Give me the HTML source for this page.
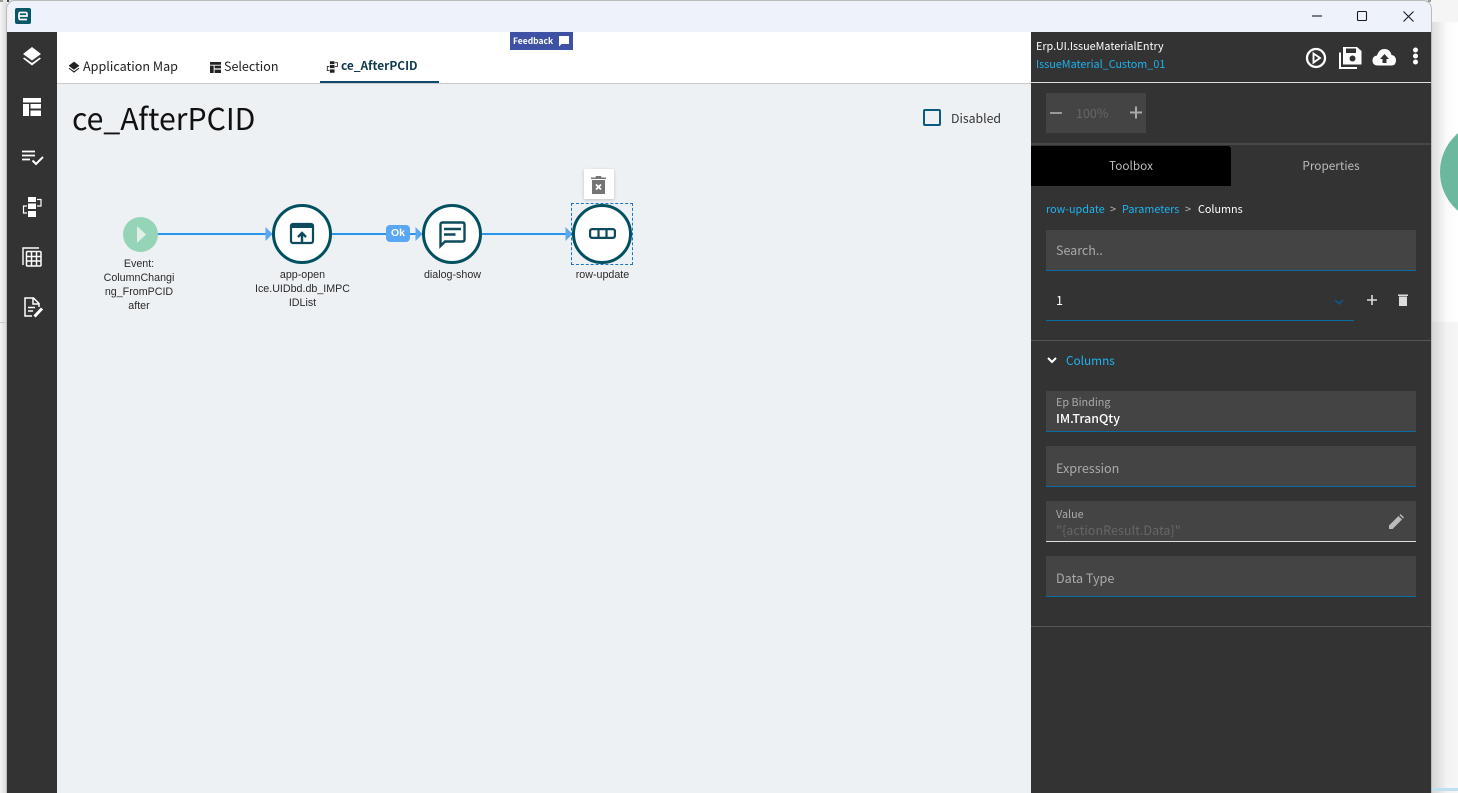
<!DOCTYPE html>
<html><head><meta charset="utf-8"><style>
*{box-sizing:border-box}
html,body{margin:0;padding:0;width:1458px;height:793px;overflow:hidden;background:#f5f5f5}
body{position:relative;font-family:"Noto Sans CJK JP","Liberation Sans",sans-serif;font-size:13px;color:#222}
.a{position:absolute;white-space:nowrap;line-height:1}
.r{font-family:"Liberation Sans",sans-serif}
svg{position:absolute;overflow:visible}
.lab{position:absolute;text-align:center;font-family:"Liberation Sans",sans-serif;font-size:10.700px;line-height:14px;color:#2a2a2a}
.field{position:absolute;left:1046px;width:370px;background:#444;border-bottom:1px solid #0a6aa3;height:41px}
.node{position:absolute;width:60px;height:60px;border:3.5px solid #00505f;border-radius:50%;background:#fff}
</style></head><body>
<!-- background -->
<div class="a" style="left:1431px;top:22px;width:27px;height:300px;background:linear-gradient(90deg,#dcdcdc,#fbfbfb 60%,#fff);overflow:hidden"><div style="position:absolute;left:9px;top:99px;width:102px;height:102px;border-radius:50%;background:#6cb89f"></div></div>
<div class="a" style="left:1431px;top:322px;width:27px;height:471px;background:linear-gradient(90deg,#d4d4d4,#f3f3f3 60%,#f6f6f6)"></div>
<div class="a" style="left:1431px;top:788px;width:27px;height:3px;background:#bfe0f0"></div>
<div class="a" style="left:0;top:0;width:7px;height:793px;background:linear-gradient(90deg,#f5f5f5,#d8d8d8)"></div>
<div class="a" style="left:0;top:322px;width:7px;height:1px;background:#ccc"></div>
<div class="a" style="left:0;top:0;width:1431px;height:2px;background:repeating-linear-gradient(90deg,#999 0 3px,#e8e8e8 3px 7px,#444 7px 9px,#ddd 9px 14px)"></div>
<!-- window -->
<div class="a" style="left:7px;top:1px;width:1424px;height:792px;background:#eef3fb;border-radius:8px 8px 0 0;box-shadow:0 0 0 1px #bbb"></div>
<div class="a" style="left:15px;top:8px;width:16px;height:16px;background:#07566a;border-radius:2px"></div>
<svg style="left:15px;top:8px" width="16" height="16" viewBox="0 0 16 16"><path d="M12 11.500H5.500Q4 11.500 4 10V6Q4 4.500 5.500 4.500H10.500Q12 4.500 12 6V8H4.500" fill="none" stroke="#fff" stroke-width="1.700"/></svg>
<svg style="left:1300px;top:0" width="130" height="32" viewBox="0 0 130 32" fill="none" stroke="#1a1a1a" stroke-width="1.100"><path d="M12 16H22"/><rect x="57.500" y="11.500" width="9" height="9" rx="1"/><path d="M103.500 11.500L113.500 21.500M113.500 11.500L103.500 21.500"/></svg>
<!-- sidebar -->
<div class="a" style="left:7px;top:32px;width:50px;height:761px;background:#333"></div>
<svg style="left:22px;top:46px" width="20" height="20" viewBox="0 0 20 20" fill="#fff"><path d="M10 1L1 8L10 14.500L19 8Z"/><path d="M2.300 11.500L1 12.500L10 19.500L19 12.500L17.700 11.500L10 17Z"/></svg>
<svg style="left:23px;top:98px" width="18" height="18" viewBox="0 0 18 18" fill="#fff"><path d="M0 0H18V4.500H0ZM0 6H6V18H0ZM7.500 6H18V10.500H7.500ZM7.500 12.500H18V18H7.500Z"/></svg>
<svg style="left:22px;top:150px" width="22" height="16" viewBox="0 0 22 16" fill="none" stroke="#fff" stroke-width="1.800"><path d="M0 1.500H13M0 5.500H13M0 9.500H8"/><path d="M10.500 10.500L14 14L21 7" stroke-width="2"/></svg>
<svg style="left:23px;top:197px" width="19" height="20" viewBox="0 0 19 20"><path fill="#fff" d="M5 0H13V5H5ZM5 6.500H13V12H5ZM5 14H13V20H5Z"/><path d="M14 2.500H18V9H14M4 9H0.500V16H4" fill="none" stroke="#fff" stroke-width="1.200"/></svg>
<svg style="left:22px;top:247px" width="20" height="20" viewBox="0 0 20 20" fill="none" stroke="#fff"><path d="M1 18V1H17" stroke-width="1.400"/><rect x="4.500" y="4.500" width="14.500" height="14.500" rx="1" stroke-width="1.500"/><path d="M9.500 5V18.500M14.500 5V18.500M5 9.500H18.500M5 14H18.500" stroke-width="1.500"/></svg>
<svg style="left:24px;top:297px" width="20" height="21" viewBox="0 0 20 21" fill="none" stroke="#fff" stroke-width="1.500"><path d="M8 19H1V1H9.500L15 6.500V10"/><path d="M9 1.500V7H15" /><path d="M4 10.500H11M4 14H9"/><path d="M10.500 19.500L18 11.500" stroke-width="3"/></svg>
<!-- top tabs -->
<div class="a" style="left:57px;top:32px;width:974px;height:51px;background:#fff"></div>
<div class="a" style="left:57px;top:83px;width:974px;height:710px;background:#eef1f4;border-top:1px solid #ccc"></div>
<svg style="left:68px;top:61px" width="12" height="12" viewBox="0 0 20 20" fill="#222"><path d="M10 1L1 8L10 14.500L19 8Z"/><path d="M2.300 11.500L1 12.500L10 19.500L19 12.500L17.700 11.500L10 17Z"/></svg>
<div class="a" style="left:83px;top:58px;font-size:12.600px;line-height:16px">Application Map</div>
<svg style="left:210px;top:62px" width="11" height="11" viewBox="0 0 18 18" fill="#222"><path d="M0 0H18V4.500H0ZM0 6H6V18H0ZM7.500 6H18V10.500H7.500ZM7.500 12.500H18V18H7.500Z"/></svg>
<div class="a" style="left:224px;top:58px;font-size:12.500px;line-height:16px">Selection</div>
<svg style="left:327px;top:61px" width="11" height="12" viewBox="0 0 19 20"><path fill="#222" d="M5 0H13V5H5ZM5 6.500H13V12H5ZM5 14H13V20H5Z"/><path d="M14 2.500H18V9H14M4 9H0.500V16H4" fill="none" stroke="#222" stroke-width="1.500"/></svg>
<div class="a" style="left:341px;top:58px;font-size:11.900px;line-height:16px;color:#0f3a4d;font-weight:700">ce_AfterPCID</div>
<div class="a" style="left:320px;top:81px;width:119px;height:2px;background:#0d4a6b"></div>
<div class="a" style="left:510px;top:32px;width:63px;height:18px;background:#3f51a5;color:#fff;font-size:8.500px;font-weight:700;line-height:18px;padding-left:3px">Feedback</div>
<svg style="left:558px;top:35px" width="12" height="12" viewBox="0 0 12 12" fill="#fff"><path d="M1 1H11V9H3.500L1 11.500Z"/></svg>
<!-- title -->
<div class="a" style="left:72px;top:98px;font-size:30.200px;line-height:38px;color:#111">ce_AfterPCID</div>
<div class="a" style="left:923px;top:109px;width:18px;height:17px;border:2px solid #0a5a80;border-radius:2px"></div>
<div class="a" style="left:951px;top:110px;font-size:12.300px;line-height:16px;color:#333">Disabled</div>
<!-- connectors -->
<svg style="left:0;top:0" width="1031" height="300"><path d="M157 234H272M331 234H423M481 234H573" stroke="#2b95ec" stroke-width="2" fill="none"/><path d="M265.500 227L272.500 234L265.500 241ZM415.500 227L422.500 234L415.500 241ZM565.500 227L572.500 234L565.500 241Z" fill="#5aa7f2"/></svg>
<div class="a r" style="left:386px;top:225px;width:24px;height:17px;background:#5aa7f5;border-radius:4px;color:#fff;font-weight:700;font-size:10.500px;line-height:17px;text-align:center">Ok</div>
<!-- start node -->
<div class="a" style="left:123px;top:217px;width:35px;height:35px;border-radius:50%;background:#95d4b6"></div>
<svg style="left:136px;top:226px" width="11" height="17" viewBox="0 0 11 17"><path d="M1 0L10 8.500L1 17Z" fill="#e2efe9"/></svg>
<div class="lab" style="left:97px;top:257px;width:84px">Event:<br>ColumnChangi<br>ng_FromPCID<br>after</div>
<!-- app-open -->
<div class="node" style="left:272px;top:204px"></div>
<svg style="left:290px;top:222px" width="24" height="24" viewBox="0 0 24 24" fill="none" stroke="#0d4a5c" stroke-width="2.200"><rect x="1" y="2" width="22" height="19" rx="2"/><path d="M1 4H23" stroke-width="4"/><path d="M12 21V11.500M8 15L12 11L16 15" stroke-width="2.400"/></svg>
<div class="lab" style="left:250px;top:268px;width:105px">app-open<br>Ice.UIDbd.db_IMPC<br>IDList</div>
<!-- dialog-show -->
<div class="node" style="left:422px;top:204px"></div>
<svg style="left:439px;top:221px" width="27" height="27" viewBox="0 0 27 27" fill="none" stroke="#0d4a5c" stroke-width="2.400"><path d="M1.500 25V3.500Q1.500 1.500 3.500 1.500H23.500Q25.500 1.500 25.500 3.500V18.500Q25.500 20.500 23.500 20.500H6Z"/><path d="M5 8H22M5 13.500H16.500"/></svg>
<div class="lab" style="left:405px;top:268px;width:95px">dialog-show</div>
<!-- row-update -->
<div class="a" style="left:571px;top:203px;width:62px;height:62px;border:1px dashed #1a75c8"></div>
<div class="node" style="left:572px;top:204px"></div>
<svg style="left:589px;top:228px" width="27" height="11" viewBox="0 0 27 11" fill="none" stroke="#0d4a5c" stroke-width="2.200"><rect x="1.100" y="1.100" width="24.800" height="8.800" rx="2"/><path d="M9.500 1V10M17.500 1V10"/></svg>
<div class="lab" style="left:555px;top:268px;width:95px">row-update</div>
<div class="a" style="left:584px;top:169px;width:30px;height:30px;background:#fff;border-radius:1px;box-shadow:0 1px 3px rgba(0,0,0,.2)"></div>
<svg style="left:591px;top:176px" width="15" height="18" viewBox="0 0 15 18"><path d="M0 1.500H4.500L5 0H10L10.500 1.500H15V3H0ZM1 4H14V18H1Z" fill="#757575"/><path d="M5 8.500L10 13.500M10 8.500L5 13.500" stroke="#fff" stroke-width="1.700"/></svg>
<!-- right panel -->
<div class="a" style="left:1031px;top:32px;width:400px;height:761px;background:#333"></div>
<div class="a" style="left:1036px;top:39px;font-size:10.800px;line-height:14px;color:#fff">Erp.UI.IssueMaterialEntry</div>
<div class="a" style="left:1036px;top:57px;font-size:10.800px;line-height:14px;color:#1eb4f0">IssueMaterial_Custom_01</div>
<svg style="left:1305px;top:47px" width="22" height="22" viewBox="0 0 22 22" fill="none" stroke="#fff" stroke-width="2.300"><circle cx="11" cy="11" r="9"/><path d="M8.500 6.500L15 11L8.500 15.500Z" stroke-width="1.900"/></svg>
<svg style="left:1338px;top:46px" width="24" height="24" viewBox="0 0 24 24" fill="#fff"><path d="M5 1H19L23.500 5V18.500H5Z"/><path d="M1 6.500V23H19V21H3V6.500Z"/><rect x="8" y="2.500" width="10" height="4.500" fill="#333"/><circle cx="14.500" cy="12.500" r="3" fill="#333"/></svg>
<svg style="left:1372px;top:48px" width="24" height="18" viewBox="0 0 24 18"><path d="M6 17.500Q0.500 17.500 0.500 12.500Q0.500 8 5 7.500Q7 1 12.500 1Q18 1 19.500 7Q24 7.500 24 12.500Q24 17.500 19 17.500Z" fill="#fff"/><path d="M12.500 6L8 11H10.500V15H14.500V11H17Z" fill="#333"/></svg>
<svg style="left:1412px;top:47px" width="7" height="18" viewBox="0 0 7 18" fill="#fff"><circle cx="3.500" cy="3" r="2.500"/><circle cx="3.500" cy="9" r="2.500"/><circle cx="3.500" cy="15" r="2.500"/></svg>
<div class="a" style="left:1031px;top:82px;width:400px;height:1px;background:#ddd"></div>
<div class="a" style="left:1046px;top:93px;width:100px;height:40px;background:#444"></div>
<svg style="left:1050px;top:106px" width="14" height="14" viewBox="0 0 14 14"><path d="M0 7H12" stroke="#999" stroke-width="2"/></svg>
<div class="a" style="left:1076px;top:105px;font-size:12.500px;line-height:16px;color:#666">100%</div>
<svg style="left:1130px;top:106px" width="13" height="13" viewBox="0 0 13 13"><path d="M0 6.500H12M6 .5V12.500" stroke="#aaa" stroke-width="2"/></svg>
<div class="a" style="left:1031px;top:143px;width:400px;height:2px;background:#484848"></div>
<div class="a" style="left:1031px;top:146px;width:200px;height:40px;background:#000;border-radius:0 3px 0 0"></div>
<div class="a" style="left:1031px;top:158px;width:200px;text-align:center;font-size:11.800px;line-height:16px;color:#bbb">Toolbox</div>
<div class="a" style="left:1231px;top:158px;width:200px;text-align:center;font-size:11.800px;line-height:16px;color:#bbb">Properties</div>
<div class="a" style="left:1046px;top:202px;font-size:10.800px;line-height:14px;color:#1eb4f0">row-update</div>
<div class="a" style="left:1110px;top:202px;font-size:10.800px;line-height:14px;color:#bbb">&gt;</div>
<div class="a" style="left:1122px;top:202px;font-size:10.800px;line-height:14px;color:#1eb4f0">Parameters</div>
<div class="a" style="left:1185px;top:202px;font-size:10.800px;line-height:14px;color:#bbb">&gt;</div>
<div class="a" style="left:1198px;top:202px;font-size:10.800px;line-height:14px;color:#fff">Columns</div>
<div class="field" style="top:230px"></div>
<div class="a" style="left:1056px;top:242px;font-size:12.500px;line-height:16px;color:#aaa">Search..</div>
<div class="a" style="left:1056px;top:292px;font-size:12.500px;line-height:16px;color:#fff">1</div>
<svg style="left:1334px;top:299px" width="10" height="7" viewBox="0 0 10 7"><path d="M1 1L5 5L9 1" fill="none" stroke="#0a5a95" stroke-width="1.500"/></svg>
<div class="a" style="left:1046px;top:320px;width:308px;height:1px;background:#0a6aa3"></div>
<svg style="left:1367px;top:295px" width="10" height="10" viewBox="0 0 10 10"><path d="M0 5H10M5 0V10" stroke="#ddd" stroke-width="1.600"/></svg>
<svg style="left:1398px;top:294px" width="10" height="12" viewBox="0 0 10 12"><path d="M0 .5H10V2H0ZM1 2.500H9V12H1Z" fill="#ddd"/></svg>
<div class="a" style="left:1031px;top:340px;width:400px;height:1px;background:#555"></div>
<svg style="left:1047px;top:357px" width="10" height="7" viewBox="0 0 10 7"><path d="M1 1L5 5L9 1" fill="none" stroke="#fff" stroke-width="2"/></svg>
<div class="a" style="left:1066px;top:353px;font-size:11.800px;line-height:16px;color:#1eb4f0">Columns</div>
<div class="field" style="top:391px"></div>
<div class="a" style="left:1056px;top:395px;font-size:10.800px;line-height:14px;color:#aaa">Ep Binding</div>
<div class="a" style="left:1056px;top:410px;font-size:12.400px;font-weight:500;line-height:16px;color:#fff">IM.TranQty</div>
<div class="field" style="top:446px"></div>
<div class="a" style="left:1056px;top:460px;font-size:12.600px;line-height:16px;color:#aaa">Expression</div>
<div class="field" style="top:501px;border-bottom-color:#ddd"></div>
<div class="a" style="left:1056px;top:507px;font-size:10.800px;line-height:14px;color:#aaa">Value</div>
<div class="a" style="left:1056px;top:522px;font-size:12.600px;line-height:16px;color:#666">"{actionResult.Data}"</div>
<svg style="left:1389px;top:514px" width="15" height="15" viewBox="0 0 15 15"><path d="M0 15V11.500L9.500 2L13 5.500L3.500 15ZM10.500 1L11.500 0L15 3.500L14 4.500Z" fill="#bbb"/></svg>
<div class="field" style="top:556px"></div>
<div class="a" style="left:1056px;top:570px;font-size:12.600px;line-height:16px;color:#aaa">Data Type</div>
<div class="a" style="left:1031px;top:626px;width:400px;height:1px;background:#555"></div>
</body></html>
